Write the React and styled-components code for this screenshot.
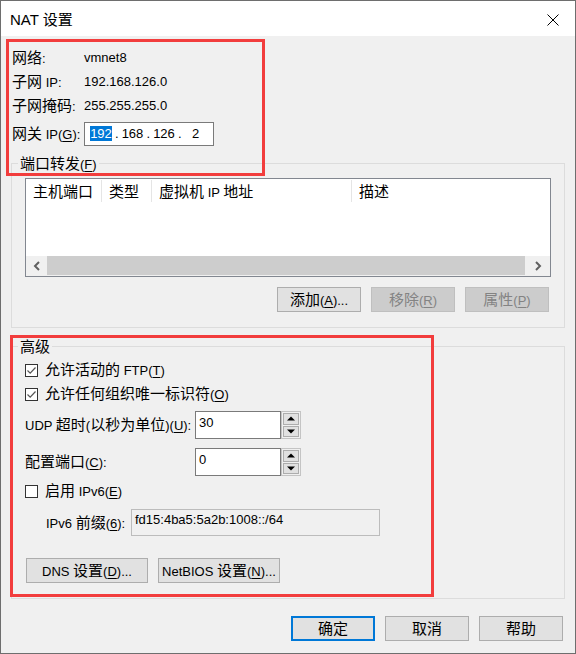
import React from "react";
import styled, { createGlobalStyle, css } from "styled-components";

const GlobalStyle = createGlobalStyle`
  html, body { margin: 0; padding: 0; background: #ffffff; }
  body {
    font-family: "Liberation Sans", "Noto Sans CJK SC", sans-serif;
    font-size: 13px;
    color: #000;
  }
  * { box-sizing: border-box; }
`;

const Han = styled.span`
  font-family: "Noto Sans CJK SC", sans-serif;
  font-size: 15px;
`;

const Acc = styled.span`
  text-decoration: underline;
  text-underline-offset: 2px;
`;

function Txt({ s }) {
  const re = /&(.)|([\u2E80-\u9FFF\uFF00-\uFFEF]+)|([^&\u2E80-\u9FFF\uFF00-\uFFEF]+)/g;
  const out = [];
  let m;
  let k = 0;
  while ((m = re.exec(s)) !== null) {
    if (m[1]) out.push(<Acc key={k++}>{m[1]}</Acc>);
    else if (m[2]) out.push(<Han key={k++}>{m[2]}</Han>);
    else out.push(<React.Fragment key={k++}>{m[3]}</React.Fragment>);
  }
  return <span>{out}</span>;
}

const Window = styled.div`
  position: relative;
  width: 576px;
  height: 654px;
  border: 1px solid #6e6e6e;
  background: #f0f0f0;
  display: flex;
  flex-direction: column;
  overflow: hidden;
`;

const TitleBar = styled.div`
  height: 35px;
  flex: none;
  background: #ffffff;
  display: flex;
  align-items: center;
  justify-content: space-between;
  padding: 2px 0 0 9px;
`;

const Title = styled.div`
  font-size: 15px;
  line-height: 20px;
`;

const CloseButton = styled.div`
  width: 44px;
  height: 33px;
  display: flex;
  align-items: center;
  justify-content: center;
`;

const Info = styled.div`
  padding: 10px 0 0 11px;
`;

const InfoRow = styled.div`
  display: grid;
  grid-template-columns: 72px 1fr;
  align-items: center;
  height: 24px;
  line-height: 20px;
  margin-top: ${(p) => p.$mt || 0}px;
`;

const IpBox = styled.div`
  width: 130px;
  height: 24px;
  border: 1px solid #7a7a7a;
  background: #ffffff;
  display: flex;
  align-items: center;
  padding-left: 3px;
  line-height: 18px;
`;

const Octet = styled.span`
  width: 26px;
  text-align: center;
`;

const Selected = styled.span`
  background: #0078d7;
  color: #ffffff;
`;

const Dot = styled.span`
  width: 5.5px;
  text-align: center;
`;

const Group = styled.fieldset`
  margin: ${(p) => p.$mt}px 10px 0;
  border: 1px solid #dcdcdc;
  padding: ${(p) => p.$pt}px 13px 15px;
  min-width: 0;
`;

const Legend = styled.legend`
  padding: 0 2px;
  margin-left: -7px;
  line-height: 20px;
  height: 20px;
`;

const ListBox = styled.div`
  height: 99px;
  border: 1px solid #828790;
  background: #ffffff;
  display: flex;
  flex-direction: column;
`;

const HeaderRow = styled.div`
  display: flex;
  height: 24px;
  flex: none;
`;

const HeaderCell = styled.div`
  width: ${(p) => (p.$w ? `${p.$w}px` : "auto")};
  flex: ${(p) => (p.$w ? "none" : "1")};
  margin-top: 1px;
  height: 22px;
  line-height: 22px;
  padding-left: 7px;
  border-right: ${(p) => (p.$w ? "1px solid #e5e5e5" : "none")};
  white-space: nowrap;
`;

const ListBody = styled.div`
  flex: 1;
`;

const ScrollBar = styled.div`
  height: 20px;
  flex: none;
  display: flex;
  background: #f0f0f0;
`;

const ScrollArrow = styled.div`
  width: ${(p) => p.$w}px;
  display: flex;
  align-items: center;
  justify-content: center;
`;

const Thumb = styled.div`
  flex: 1;
  background: #cdcdcd;
  margin-bottom: 1px;
`;

const ButtonRow = styled.div`
  display: flex;
  justify-content: ${(p) => (p.$start ? "flex-start" : "flex-end")};
  gap: 10px;
  margin-top: ${(p) => p.$mt}px;
  padding: 0 ${(p) => p.$pr || 0}px 0 ${(p) => p.$pl || 0}px;
`;

const Button = styled.button`
  width: ${(p) => p.$w || 84}px;
  height: 25px;
  padding: 0;
  font: inherit;
  line-height: 20px;
  color: #000;
  background: #e1e1e1;
  border: 1px solid #adadad;
  display: flex;
  align-items: center;
  justify-content: center;
  white-space: nowrap;
  ${(p) =>
    p.$primary &&
    css`
      border: 2px solid #0078d7;
    `}
  &:disabled {
    background: #cccccc;
    border-color: #bfbfbf;
    color: #838383;
  }
`;

const CheckRow = styled.div`
  display: flex;
  align-items: center;
  gap: 7px;
  height: 24px;
  line-height: 20px;
  margin-top: ${(p) => p.$mt || 0}px;
`;

const CheckBox = styled.span`
  width: 13px;
  height: 13px;
  border: 1px solid #333333;
  background: #ffffff;
  display: flex;
  align-items: center;
  justify-content: center;
  flex: none;
`;

const FieldRow = styled.div`
  display: grid;
  grid-template-columns: ${(p) => p.$cols};
  align-items: center;
  margin-top: ${(p) => p.$mt}px;
  padding-left: ${(p) => p.$pl || 0}px;
  line-height: 20px;
`;

const SpinInput = styled.div`
  width: 86px;
  height: 28px;
  border: 1px solid #7a7a7a;
  background: #ffffff;
  padding: 1px 3px 0;
  line-height: 20px;
`;

const Spinner = styled.div`
  width: 20px;
  height: 28px;
  margin-top: 1px;
  border: 1px solid #c4c4c4;
  background: #f0f0f0;
  padding: 1px;
  display: flex;
  flex-direction: column;
  gap: 1px;
`;

const SpinButton = styled.div`
  flex: 1;
  background: #e1e1e1;
  border: 1px solid #adadad;
  display: flex;
  align-items: center;
  justify-content: center;
`;

const PrefixInput = styled.div`
  width: 249px;
  height: 27px;
  border: 1px solid #bcbcbc;
  padding: 0 3px;
  line-height: 20px;
`;

const RedBox = styled.div`
  position: absolute;
  border: 3px solid #f23d3d;
  pointer-events: none;
`;

const Chevron = ({ dir }) => (
  <svg width="8" height="10" viewBox="0 0 8 10">
    <path
      d={dir === "left" ? "M6 1 L2 5 L6 9" : "M2 1 L6 5 L2 9"}
      fill="none"
      stroke="#606060"
      strokeWidth="2"
    />
  </svg>
);

const Check = ({ on }) =>
  on ? (
    <svg width="11" height="11" viewBox="0 0 11 11">
      <path d="M1.5 5.5 L4.2 8.2 L9.5 2.5" fill="none" stroke="#555" strokeWidth="1.2" />
    </svg>
  ) : null;

const Tri = ({ up }) => (
  <svg width="8" height="5" viewBox="0 0 8 5">
    <path d={up ? "M0 4.5 L4 0.5 L8 4.5 Z" : "M0 0.5 L8 0.5 L4 4.5 Z"} fill="#000" />
  </svg>
);

function Spin({ value }) {
  return (
    <>
      <SpinInput>{value}</SpinInput>
      <Spinner>
        <SpinButton>
          <Tri up />
        </SpinButton>
        <SpinButton>
          <Tri />
        </SpinButton>
      </Spinner>
    </>
  );
}

export default function App() {
  return (
    <>
      <GlobalStyle />
      <Window>
        <TitleBar>
          <Title>
            <Txt s="NAT 设置" />
          </Title>
          <CloseButton>
            <svg width="12" height="12" viewBox="0 0 12 12">
              <path d="M0.5 0.5 L11.5 11.5 M11.5 0.5 L0.5 11.5" stroke="#000" strokeWidth="1" />
            </svg>
          </CloseButton>
        </TitleBar>

        <Info>
          <InfoRow>
            <Txt s="网络:" />
            <span>vmnet8</span>
          </InfoRow>
          <InfoRow>
            <Txt s="子网 IP:" />
            <span>192.168.126.0</span>
          </InfoRow>
          <InfoRow>
            <Txt s="子网掩码:" />
            <span>255.255.255.0</span>
          </InfoRow>
          <InfoRow $mt={4}>
            <Txt s="网关 IP(&G):" />
            <IpBox>
              <Octet><Selected>192</Selected></Octet>
              <Dot>.</Dot>
              <Octet>168</Octet>
              <Dot>.</Dot>
              <Octet>126</Octet>
              <Dot>.</Dot>
              <Octet>2</Octet>
            </IpBox>
          </InfoRow>
        </Info>

        <Group $mt={7} $pt={5}>
          <Legend><Txt s="端口转发(&F)" /></Legend>
          <ListBox>
            <HeaderRow>
              <HeaderCell $w={76}><Txt s="主机端口" /></HeaderCell>
              <HeaderCell $w={50}><Txt s="类型" /></HeaderCell>
              <HeaderCell $w={200}><Txt s="虚拟机 IP 地址" /></HeaderCell>
              <HeaderCell><Txt s="描述" /></HeaderCell>
            </HeaderRow>
            <ListBody />
            <ScrollBar>
              <ScrollArrow $w={21}><Chevron dir="left" /></ScrollArrow>
              <Thumb />
              <ScrollArrow $w={25}><Chevron dir="right" /></ScrollArrow>
            </ScrollBar>
          </ListBox>
          <ButtonRow $mt={10} $pr={2}>
            <Button><Txt s="添加(&A)..." /></Button>
            <Button disabled><Txt s="移除(&R)" /></Button>
            <Button disabled><Txt s="属性(&P)" /></Button>
          </ButtonRow>
        </Group>

        <Group $mt={8} $pt={2}>
          <Legend><Txt s="高级" /></Legend>
          <CheckRow>
            <CheckBox><Check on /></CheckBox>
            <Txt s="允许活动的 FTP(&T)" />
          </CheckRow>
          <CheckRow>
            <CheckBox><Check on /></CheckBox>
            <Txt s="允许任何组织唯一标识符(&O)" />
          </CheckRow>
          <FieldRow $cols="170px 86px 20px" $mt={4}>
            <Txt s="UDP 超时(以秒为单位)(&U):" />
            <Spin value="30" />
          </FieldRow>
          <FieldRow $cols="170px 86px 20px" $mt={8}>
            <Txt s="配置端口(&C):" />
            <Spin value="0" />
          </FieldRow>
          <CheckRow $mt={3}>
            <CheckBox />
            <Txt s="启用 IPv6(&E)" />
          </CheckRow>
          <FieldRow $cols="85px 249px" $mt={6} $pl={21}>
            <Txt s="IPv6 前缀(&6):" />
            <PrefixInput>fd15:4ba5:5a2b:1008::/64</PrefixInput>
          </FieldRow>
          <ButtonRow $start $mt={22} $pl={1}>
            <Button $w={122}><Txt s="DNS 设置(&D)..." /></Button>
            <Button $w={122}><Txt s="NetBIOS 设置(&N)..." /></Button>
          </ButtonRow>
        </Group>

        <ButtonRow $mt={17} $pr={12}>
          <Button $primary><Txt s="确定" /></Button>
          <Button><Txt s="取消" /></Button>
          <Button><Txt s="帮助" /></Button>
        </ButtonRow>

        <RedBox style={{ left: 5, top: 38, width: 259, height: 137 }} />
        <RedBox style={{ left: 9, top: 334, width: 424, height: 262 }} />
      </Window>
    </>
  );
}
